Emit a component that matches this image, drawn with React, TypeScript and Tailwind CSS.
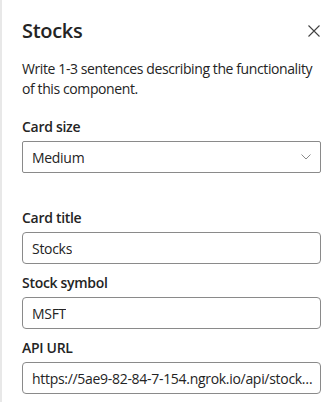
import React from 'react';

const font = { fontFamily: '"Open Sans", "Noto Sans", sans-serif' };

const Field: React.FC<{ label: string; value: string }> = ({ label, value }) => (
  <div className="flex flex-col">
    <label className="text-[14px] font-semibold text-[#242424] leading-[20px] mb-[4px] tracking-[-0.3px]">{label}</label>
    <div className="h-[32px] border border-[#8a8a8a] rounded-[4px] pl-[9px] pr-[7px] flex items-center text-[14px] text-[#242424] tracking-[-0.3px] overflow-hidden whitespace-nowrap">
      <span className="truncate">{value}</span>
    </div>
  </div>
);

export default function App() {
  return (
    <div className="w-[336px] h-[402px] bg-white border-l-2 border-[#e8e8e8] overflow-hidden" style={font}>
      <div className="pl-[20px] pr-[15px] pt-[17px]">
        <div className="flex items-center justify-between">
          <h1 className="text-[20px] font-semibold text-[#242424] leading-[28px] tracking-[-0.3px]">Stocks</h1>
          <svg width="12" height="12" viewBox="0 0 12 12" className="mr-[1px]">
            <path d="M0.5 0.5 L11.5 11.5 M11.5 0.5 L0.5 11.5" stroke="#424242" strokeWidth="1.1" />
          </svg>
        </div>
        <p className="mt-[14px] text-[14px] leading-[20px] text-[#242424] tracking-[-0.4px]">
          Write 1-3 sentences describing the functionality of this component.
        </p>

        <div className="mt-[18px] flex flex-col">
          <label className="text-[14px] font-semibold text-[#242424] leading-[20px] mb-[4px] tracking-[-0.3px]">Card size</label>
          <div className="h-[32px] border border-[#8a8a8a] rounded-[2px] pl-[9px] pr-[9px] flex items-center justify-between text-[14px] text-[#242424] tracking-[-0.3px]">
            <span>Medium</span>
            <svg width="10" height="6" viewBox="0 0 10 6">
              <path d="M0.5 0.5 L5 5 L9.5 0.5" stroke="#8a8a8a" fill="none" strokeWidth="1" />
            </svg>
          </div>
        </div>

        <div className="mt-[35px] flex flex-col gap-[9px]">
          <Field label="Card title" value="Stocks" />
          <Field label="Stock symbol" value="MSFT" />
          <Field label="API URL" value="https://5ae9-82-84-7-154.ngrok.io/api/stocks/quote" />
        </div>
      </div>
    </div>
  );
}
